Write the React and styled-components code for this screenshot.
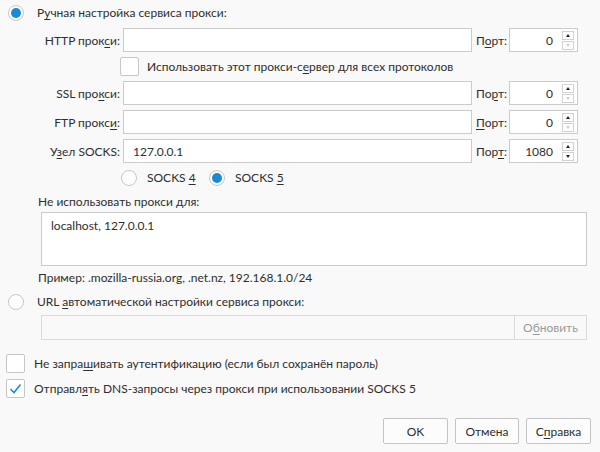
import styled, { createGlobalStyle } from "styled-components";

const GlobalStyle = createGlobalStyle`
  html, body {
    margin: 0;
    padding: 0;
    background: #f9f9f9;
  }
  body {
    font-family: Lato, "Open Sans", "Liberation Sans", sans-serif;
    font-size: 12px;
    color: #2e2e2e;
  }
`;

const Page = styled.div`
  width: 600px;
  height: 452px;
  background: #f9f9f9;
  display: flex;
  flex-direction: column;
  box-sizing: border-box;
  padding-top: 5px;
  overflow: hidden;
`;

const RadioRow = styled.label`
  display: flex;
  align-items: center;
  gap: ${(p) => p.$gap || 13}px;
  width: ${(p) => (p.$w ? `${p.$w}px` : "auto")};
  height: 16px;
  padding-left: ${(p) => p.$indent ?? 8}px;
  margin-top: ${(p) => p.$top || 0}px;
  line-height: 16px;
  white-space: nowrap;
`;

const RadioCircle = styled.span`
  width: 16px;
  height: 16px;
  box-sizing: border-box;
  border-radius: 50%;
  border: 1px solid #c6c6c6;
  background: #fff;
  display: flex;
  align-items: center;
  justify-content: center;
  flex-shrink: 0;
  &::after {
    content: "";
    display: ${(p) => (p.$checked ? "block" : "none")};
    width: 10px;
    height: 10px;
    border-radius: 50%;
    background: #1b8ad6;
  }
`;

const ProxyGrid = styled.div`
  display: grid;
  grid-template-columns: 123px 353px 33px 69px;
  grid-template-rows: 24px 19px 24px 24px 24px 20px;
  row-gap: 5px;
  margin-top: 7px;
  align-items: center;
`;

const FieldLabel = styled.span`
  text-align: right;
  padding-right: 3px;
  white-space: nowrap;
`;

const PortLabel = styled.span`
  white-space: nowrap;
`;

const TextBox = styled.div`
  box-sizing: border-box;
  width: ${(p) => p.$w || 349}px;
  height: ${(p) => p.$h || 24}px;
  border: 1px solid #cbcbcb;
  background: #fff;
  padding: ${(p) => p.$pad || "0 9px"};
  display: flex;
  align-items: ${(p) => (p.$top ? "flex-start" : "center")};
  white-space: nowrap;
`;

const PortBox = styled.div`
  box-sizing: border-box;
  width: 69px;
  height: 24px;
  border: 1px solid #cbcbcb;
  background: #fff;
  display: flex;
  align-items: center;
`;

const PortValue = styled.span`
  flex: 1;
  text-align: right;
  padding-right: 9px;
`;

const Spinner = styled.div`
  display: flex;
  flex-direction: column;
  width: 12px;
  margin-right: 3px;
`;

const SpinButton = styled.span`
  height: 9px;
  box-sizing: border-box;
  border: 1px solid #d2d2d2;
  margin-top: ${(p) => (p.$down ? "1px" : "0")};
  display: flex;
  align-items: center;
  justify-content: center;
  &::after {
    content: "";
    width: 0;
    height: 0;
    border-left: 2.5px solid transparent;
    border-right: 2.5px solid transparent;
    ${(p) =>
      p.$down
        ? `border-top: 3px solid ${p.$off ? "#cfcfcf" : "#222"};`
        : `border-bottom: 3px solid ${p.$off ? "#cfcfcf" : "#222"};`}
  }
`;

const CheckRow = styled.label`
  display: flex;
  align-items: center;
  gap: ${(p) => p.$gap || 9}px;
  padding-left: ${(p) => p.$indent || 0}px;
  margin-top: ${(p) => p.$top || 0}px;
  white-space: nowrap;
`;

const CheckBox = styled.span`
  width: 19px;
  height: 19px;
  box-sizing: border-box;
  border: 1px solid #c6c6c6;
  border-radius: 2px;
  background: #fff;
  display: flex;
  align-items: center;
  justify-content: center;
  flex-shrink: 0;
`;

const SocksChoices = styled.div`
  grid-column: 2 / 5;
  display: flex;
  align-items: center;
  margin-left: -2px;
`;

const Text = styled.div`
  padding-left: ${(p) => p.$indent || 0}px;
  margin-top: ${(p) => p.$top || 0}px;
  line-height: 16px;
  white-space: nowrap;
`;

const Indented = styled.div`
  padding-left: 41px;
  margin-top: ${(p) => p.$top || 0}px;
`;

const UrlBox = styled.div`
  box-sizing: border-box;
  width: 546px;
  height: 25px;
  border: 1px solid #dadada;
  background: #f9f9f9;
  display: flex;
  justify-content: flex-end;
`;

const RefreshButton = styled.span`
  width: 71px;
  border-left: 1px solid #dadada;
  color: #9a9a9a;
  display: flex;
  align-items: center;
  justify-content: center;
`;

const ButtonBar = styled.div`
  display: flex;
  justify-content: flex-end;
  gap: 7px;
  padding-right: 9px;
  margin-top: 20px;
`;

const Button = styled.button`
  font: inherit;
  color: #2e2e2e;
  width: ${(p) => p.$w || 65}px;
  height: 26px;
  box-sizing: border-box;
  border: 1px solid #c4c4c4;
  border-radius: 2px;
  background: #fcfcfc;
  padding: 0;
`;

const U = styled.u`
  text-decoration-thickness: 1px;
  text-underline-offset: 2px;
`;

const Check = () => (
  <svg width="13" height="11" viewBox="0 0 13 11">
    <path d="M1.5 6 L5 9.5 L11.5 1.5" fill="none" stroke="#1b8ad6" strokeWidth="1.6" />
  </svg>
);

const Port = ({ value, off }) => (
  <PortBox>
    <PortValue>{value}</PortValue>
    <Spinner>
      <SpinButton />
      <SpinButton $down $off={off} />
    </Spinner>
  </PortBox>
);

const rows = [
  { label: <>HTTP прок<U>с</U>и:</>, port: <>П<U>о</U>рт:</>, host: "", value: "0", off: true },
  { label: <>SSL про<U>к</U>си:</>, port: <>По<U>р</U>т:</>, host: "", value: "0", off: true },
  { label: <>FTP прокс<U>и</U>:</>, port: <><U>П</U>орт:</>, host: "", value: "0", off: true },
  { label: <>У<U>з</U>ел SOCKS:</>, port: <>Пор<U>т</U>:</>, host: "127.0.0.1", value: "1080", off: false },
];

const ProxyRow = ({ row }) => (
  <>
    <FieldLabel>{row.label}</FieldLabel>
    <TextBox>{row.host}</TextBox>
    <PortLabel>{row.port}</PortLabel>
    <Port value={row.value} off={row.off} />
  </>
);

export default function App() {
  return (
    <Page>
      <GlobalStyle />
      <RadioRow>
        <RadioCircle $checked />
        <span>
          Р<U>у</U>чная настройка сервиса прокси:
        </span>
      </RadioRow>

      <ProxyGrid>
        <ProxyRow row={rows[0]} />
        <span />
        <CheckRow style={{ gridColumn: "2 / 5" }} $gap={8}>
          <CheckBox style={{ marginLeft: -3 }} />
          <span>
            Использовать этот прокси-с<U>е</U>рвер для всех протоколов
          </span>
        </CheckRow>
        <ProxyRow row={rows[1]} />
        <ProxyRow row={rows[2]} />
        <ProxyRow row={rows[3]} />
        <span />
        <SocksChoices>
          <RadioRow $indent={0} $gap={10} $w={88}>
            <RadioCircle />
            <span>
              SOCKS <U>4</U>
            </span>
          </RadioRow>
          <RadioRow $indent={0} $gap={10}>
            <RadioCircle $checked />
            <span>
              SOCKS <U>5</U>
            </span>
          </RadioRow>
        </SocksChoices>
      </ProxyGrid>

      <Text $indent={38} $top={6}>
        Не использовать прокси для:
      </Text>
      <Indented $top={2}>
        <TextBox $w={546} $h={54} $top $pad="5px 9px">
          localhost, 127.0.0.1
        </TextBox>
      </Indented>
      <Text $indent={38} $top={4}>
        Пример: .mozilla-russia.org, .net.nz, 192.168.1.0/24
      </Text>

      <RadioRow $top={8}>
        <RadioCircle />
        <span>
          URL <U>а</U>втоматической настройки сервиса прокси:
        </span>
      </RadioRow>
      <Indented $top={5}>
        <UrlBox>
          <RefreshButton>
            <span>
              О<U>б</U>новить
            </span>
          </RefreshButton>
        </UrlBox>
      </Indented>

      <CheckRow $indent={6} $top={14}>
        <CheckBox />
        <span>
          Не запра<U>ш</U>ивать аутентификацию (если был сохранён пароль)
        </span>
      </CheckRow>
      <CheckRow $indent={6} $top={6}>
        <CheckBox>
          <Check />
        </CheckBox>
        <span>
          Отправл<U>я</U>ть DNS-запросы через прокси при использовании SOCKS 5
        </span>
      </CheckRow>

      <ButtonBar>
        <Button>OK</Button>
        <Button $w={64}>Отмена</Button>
        <Button>
          С<U>п</U>равка
        </Button>
      </ButtonBar>
    </Page>
  );
}
